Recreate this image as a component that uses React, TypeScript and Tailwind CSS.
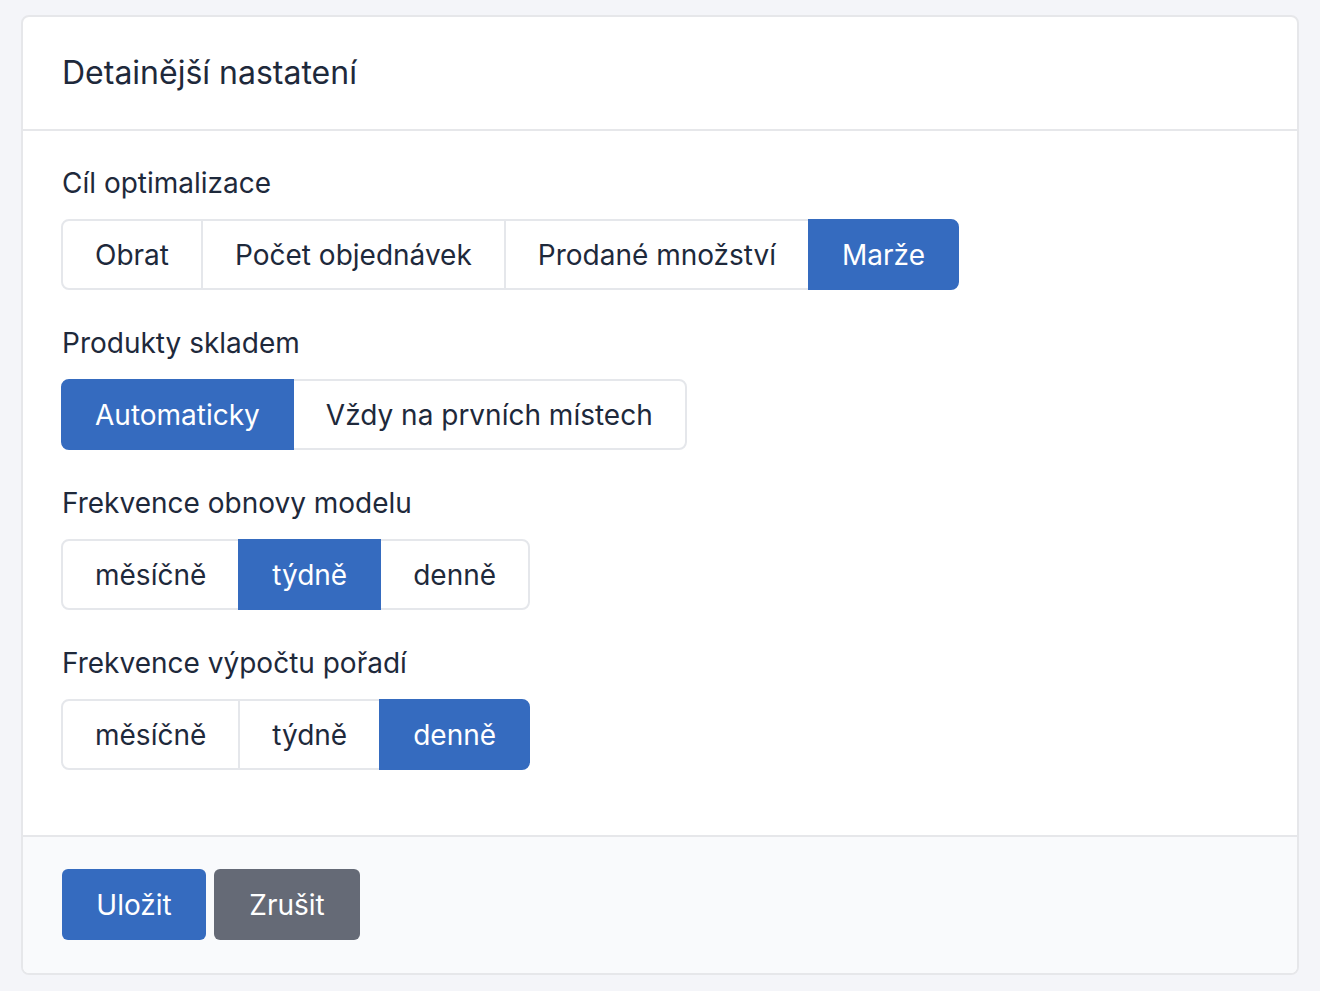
import { useState } from "react";

type Group = {
  label: string;
  options: string[];
  initial: number;
};

const GROUPS: Group[] = [
  { label: "Cíl optimalizace", options: ["Obrat", "Počet objednávek", "Prodané množství", "Marže"], initial: 3 },
  { label: "Produkty skladem", options: ["Automaticky", "Vždy na prvních místech"], initial: 0 },
  { label: "Frekvence obnovy modelu", options: ["měsíčně", "týdně", "denně"], initial: 1 },
  { label: "Frekvence výpočtu pořadí", options: ["měsíčně", "týdně", "denně"], initial: 2 },
];

const ButtonGroup = ({ group }: { group: Group }) => {
  const [active, setActive] = useState(group.initial);
  const last = group.options.length - 1;

  return (
    <div className="flex">
      {group.options.map((opt, i) => (
        <button
          key={opt}
          type="button"
          onClick={() => setActive(i)}
          className={`h-[71px] px-[32px] border-2 text-[28px] leading-none ${i > 0 ? "-ml-[2px]" : ""} ${
            i === 0 ? "rounded-l-[8px]" : ""
          } ${i === last ? "rounded-r-[8px]" : ""} ${
            active === i
              ? "relative z-10 bg-[#356bbf] border-[#356bbf] text-white"
              : "bg-white border-[#e5e7eb] text-[#1e293b]"
          }`}
        >
          {opt}
        </button>
      ))}
    </div>
  );
};

export default function App() {
  return (
    <div
      className="min-h-screen bg-[#f4f5f9] pt-[15px] pl-[21px] pr-[21px] pb-[17px]"
      style={{ fontFamily: "Inter, 'Noto Sans', sans-serif" }}
    >
      <div className="w-[1278px] border-2 border-[#e6e7ea] rounded-[8px] bg-white overflow-hidden">
        {/* Header */}
        <div className="h-[114px] flex items-center px-[39px] border-b-2 border-[#e6e7ea]">
          <h1 className="text-[32px] text-[#1e293b]">Detainější nastatení</h1>
        </div>

        {/* Body */}
        <div className="px-[38px] pt-[34px] pb-[65px] flex flex-col gap-[35px]">
          {GROUPS.map((g) => (
            <div key={g.label} className="flex flex-col gap-[18px]">
              <div className="text-[28px] leading-[36px] text-[#1e293b] pl-[1px]">{g.label}</div>
              <ButtonGroup group={g} />
            </div>
          ))}
        </div>

        {/* Footer */}
        <div className="bg-[#f9fafc] border-t-2 border-[#e6e7ea] px-[39px] pt-[32px] pb-[33px] flex gap-[8px]">
          <button
            type="button"
            className="h-[71px] w-[144px] rounded-[6px] bg-[#356bbf] text-white text-[28px]"
          >
            Uložit
          </button>
          <button
            type="button"
            className="h-[71px] w-[146px] rounded-[6px] bg-[#656a76] text-white text-[28px]"
          >
            Zrušit
          </button>
        </div>
      </div>
    </div>
  );
}
